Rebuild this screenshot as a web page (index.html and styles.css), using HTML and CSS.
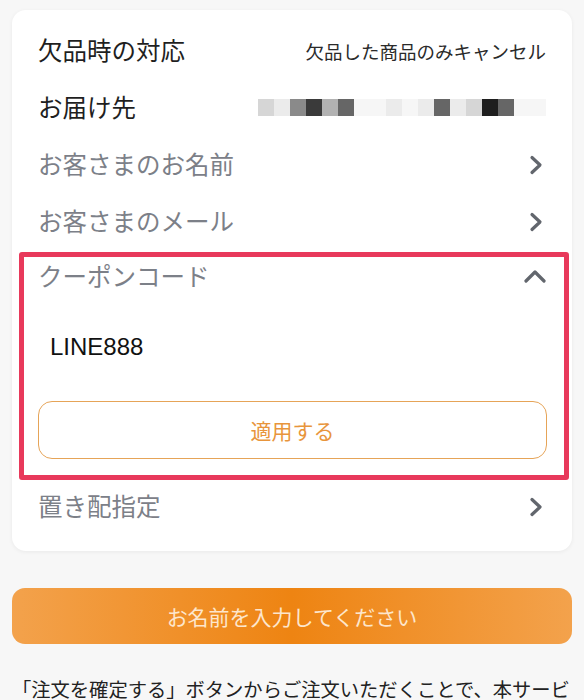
FILE: index.html
```html
<!DOCTYPE html>
<html lang="ja">
<head>
    <meta charset="UTF-8">
    <meta name="viewport" content="width=device-width, initial-scale=1.0">
    <title>ご注文内容の確認</title>
    <link rel="stylesheet" href="styles.css">
</head>
<body>
    <div class="page">
        <div class="card">
            <div class="row">
                <span class="label">欠品時の対応</span>
                <span class="value">欠品した商品のみキャンセル</span>
            </div>
            <div class="row">
                <span class="label">お届け先</span>
                <span class="mosaic">
                    <i class="m2"></i><i class="m1"></i><i class="m4"></i><i class="m6"></i><i class="m3"></i><i class="m5"></i><i class="m0"></i><i class="m0"></i><i class="m1"></i><i class="m0"></i><i class="m1"></i><i class="m5"></i><i class="m1"></i><i class="m2"></i><i class="m7"></i><i class="m5"></i><i class="m0"></i><i class="m0"></i>
                </span>
            </div>
            <div class="row link">
                <span class="label muted">お客さまのお名前</span>
                <svg class="chev" width="14" height="20" viewBox="0 0 14 20"><polyline points="3,2.5 11,10 3,17.5"/></svg>
            </div>
            <div class="row link">
                <span class="label muted">お客さまのメール</span>
                <svg class="chev" width="14" height="20" viewBox="0 0 14 20"><polyline points="3,2.5 11,10 3,17.5"/></svg>
            </div>

            <div class="coupon">
                <div class="coupon-head">
                    <span class="label muted">クーポンコード</span>
                    <svg class="chev up" width="24" height="14" viewBox="0 0 24 14"><polyline points="3,12 12,3 21,12"/></svg>
                </div>
                <div class="coupon-input">LINE888</div>
                <button class="apply-btn">適用する</button>
                <div class="highlight"></div>
            </div>

            <div class="row link">
                <span class="label muted">置き配指定</span>
                <svg class="chev" width="14" height="20" viewBox="0 0 14 20"><polyline points="3,2.5 11,10 3,17.5"/></svg>
            </div>
        </div>

        <button class="submit-btn">お名前を入力してください</button>

        <p class="note">「注文を確定する」ボタンからご注文いただくことで、本サービスの利用規約およびプライバシーポリシーに同意したものとみなされます。</p>
    </div>
</body>
</html>
```

FILE: styles.css
```css
* {
    margin: 0;
    padding: 0;
    box-sizing: border-box;
}

body {
    background-color: #f7f7f7;
    font-family: "Noto Sans CJK JP", "Noto Sans", sans-serif;
    color: #222;
}

.page {
    padding: 10px 12px 0;
}

.card {
    background-color: #fff;
    border-radius: 14px;
    box-shadow: 0 1px 4px rgba(0, 0, 0, 0.06);
    padding: 12px 25px 16px 26px;
}

.row {
    height: 57px;
    display: flex;
    align-items: center;
    justify-content: space-between;
}

.label {
    font-size: 24.5px;
    line-height: 1;
    color: #1f1f1f;
}

.label.muted {
    color: #7c8088;
}

.value {
    font-size: 18.5px;
    color: #2a2a2a;
    margin-right: 1px;
}

.mosaic {
    display: flex;
    margin-right: 1px;
}

.mosaic i {
    display: block;
    width: 16px;
    height: 17px;
}

.mosaic .m0 { background-color: #f6f6f6; }
.mosaic .m1 { background-color: #ebebeb; }
.mosaic .m2 { background-color: #d6d6d6; }
.mosaic .m3 { background-color: #b2b2b2; }
.mosaic .m4 { background-color: #8a8a8a; }
.mosaic .m5 { background-color: #666; }
.mosaic .m6 { background-color: #3a3a3a; }
.mosaic .m7 { background-color: #1e1e1e; }

.chev {
    fill: none;
    stroke: #62666d;
    stroke-width: 3.2;
    stroke-linecap: round;
    stroke-linejoin: round;
    margin-right: 4px;
}

.chev.up {
    margin-right: 0;
}

.coupon {
    position: relative;
    padding-bottom: 19px;
}

.coupon-head {
    height: 52px;
    display: flex;
    align-items: center;
    justify-content: space-between;
}

.coupon-input {
    margin-top: 15px;
    height: 60px;
    display: flex;
    align-items: center;
    padding-left: 12px;
    font-family: "Liberation Sans", Arial, sans-serif;
    font-size: 24px;
    color: #111;
}

.apply-btn {
    display: block;
    width: 100%;
    height: 58px;
    margin-top: 24px;
    border: 1.5px solid #e6a458;
    border-radius: 14px;
    background-color: #fff;
    color: #e8953c;
    font-family: "Noto Sans CJK JP", sans-serif;
    font-size: 21px;
}

/* red annotation frame drawn over the coupon block */
.highlight {
    position: absolute;
    top: 2px;
    bottom: -2px;
    left: -19px;
    right: -22px;
    border: 5px solid #e8395b;
    border-radius: 3px;
    pointer-events: none;
}

.submit-btn {
    display: block;
    width: 100%;
    height: 56px;
    margin-top: 37px;
    border: none;
    border-radius: 13px;
    background: linear-gradient(90deg, #f3a24c 0%, #ee8412 50%, #f3a24c 100%);
    color: #fde6cc;
    font-family: "Noto Sans CJK JP", sans-serif;
    font-size: 21px;
}

.note {
    margin-top: 30px;
    font-size: 19.3px;
    line-height: 1.6;
    color: #222;
}
```
